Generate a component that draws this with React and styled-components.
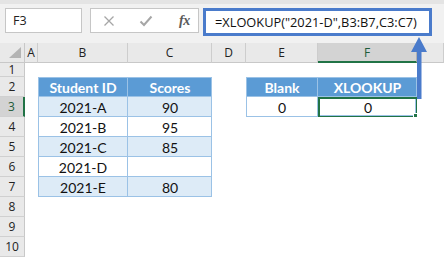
import React from "react";
import styled, { createGlobalStyle } from "styled-components";

const GlobalStyle = createGlobalStyle`
  html, body { margin: 0; padding: 0; background: #ffffff; overflow: hidden; }
  #root { width: 444px; height: 258px; }
`;

const Frame = styled.div`
  position: relative;
  width: 444px;
  height: 258px;
  overflow: hidden;
  background: #ffffff;
`;

const FormulaBar = styled.div`
  display: flex;
  align-items: flex-start;
  height: 43px;
  box-sizing: border-box;
  padding: 8px 0 0 5px;
  background: #f1f1f1;
  border-top: 4px solid #e4e4e4;
  padding-top: 4px;
`;

const NameBox = styled.div`
  box-sizing: border-box;
  width: 77px;
  height: 25px;
  border: 1px solid #c6c6c6;
  background: #ffffff;
  display: flex;
  align-items: center;
  padding-left: 7px;
  font-family: "Open Sans", sans-serif;
  font-size: 12.5px;
  color: #222;
`;

const ButtonBox = styled.div`
  box-sizing: border-box;
  width: 109px;
  height: 25px;
  margin-left: 8px;
  border: 1px solid #c6c6c6;
  background: #ffffff;
  display: flex;
  align-items: center;
  padding-left: 12px;
  gap: 24px;
`;

const FxLabel = styled.span`
  font-family: "Liberation Serif", serif;
  font-style: italic;
  font-weight: bold;
  font-size: 14px;
  color: #5a5a5a;
  margin-left: 2px;
  letter-spacing: -0.5px;
`;

const FormulaBox = styled.div`
  box-sizing: border-box;
  width: 229px;
  height: 28px;
  margin-left: 4px;
  border: 3px solid #4a7bcb;
  background: #ffffff;
  display: flex;
  align-items: center;
  padding-left: 9px;
  font-family: "Open Sans", sans-serif;
  font-size: 12.8px;
  color: #111;
  white-space: nowrap;
`;

const Sheet = styled.div`
  display: grid;
  grid-template-columns: 25px 13px 90px 84px 34px 72px 99px 1fr;
  grid-template-rows: 20px 14px repeat(9, 20px);
`;

const Corner = styled.div`
  background: #e9e9e9;
  border-right: 1px solid #c8c8c8;
  border-bottom: 1px solid #c8c8c8;
  box-sizing: border-box;
  display: flex;
  align-items: flex-end;
  justify-content: flex-end;
  padding: 0 3px 4px 0;
`;

const ColHeader = styled.div`
  box-sizing: border-box;
  background: ${(p) => (p.$selected ? "#d3d3d3" : "#e9e9e9")};
  border-right: 1px solid ${(p) => (p.$selected ? "#b0b0b0" : "#cdcdcd")};
  border-bottom: ${(p) => (p.$selected ? "2px solid #217346" : "1px solid #c8c8c8")};
  display: flex;
  align-items: center;
  justify-content: center;
  font-family: "Open Sans", sans-serif;
  font-size: 12px;
  color: ${(p) => (p.$selected ? "#1f5c3a" : "#222")};
`;

const RowHeader = styled.div`
  box-sizing: border-box;
  background: ${(p) => (p.$selected ? "#d3d3d3" : "#e9e9e9")};
  border-right: ${(p) => (p.$selected ? "2px solid #217346" : "1px solid #c8c8c8")};
  border-bottom: 1px solid #d0d0d0;
  display: flex;
  align-items: center;
  justify-content: center;
  font-family: "Open Sans", sans-serif;
  font-size: 12px;
  color: ${(p) => (p.$selected ? "#1f5c3a" : "#222")};
`;

const TB = "#9bc2e6";

const fills = {
  head: "#5b9bd5",
  band: "#ddebf7",
  plain: "#ffffff",
};

const Cell = styled.div`
  position: relative;
  box-sizing: border-box;
  display: flex;
  align-items: center;
  justify-content: center;
  background: ${(p) => (p.$kind ? fills[p.$kind] : "#ffffff")};
  font-family: "Lato", sans-serif;
  font-size: 14px;
  font-weight: ${(p) => (p.$kind === "head" ? 700 : 400)};
  color: ${(p) => (p.$kind === "head" ? "#ffffff" : "#111")};
  box-shadow: ${(p) =>
    p.$kind
      ? [
          p.$edgeL && `inset 1px 0 0 ${TB}`,
          p.$edgeT && `inset 0 1px 0 ${TB}`,
          `inset -1px 0 0 ${TB}`,
          `inset 0 -1px 0 ${TB}`,
        ]
          .filter(Boolean)
          .join(", ")
      : "none"};
  ${(p) => (p.$active ? "border: 2px solid #217346; margin: 0 -1px -1px 0;" : "")}
`;

const Handle = styled.span`
  position: absolute;
  right: -4px;
  bottom: -4px;
  width: 5px;
  height: 5px;
  background: #217346;
  border: 1px solid #ffffff;
`;

const ArrowSvg = styled.svg`
  position: absolute;
  left: 408px;
  top: 36px;
`;

const cols = ["A", "B", "C", "D", "E", "F", "G"];

const table = {
  2: { B: ["head", "Student ID"], C: ["head", "Scores"], E: ["head", "Blank"], F: ["head", "XLOOKUP"] },
  3: { B: ["band", "2021-A"], C: ["band", "90"], E: ["plain", "0"], F: ["plain", "0"] },
  4: { B: ["plain", "2021-B"], C: ["plain", "95"] },
  5: { B: ["band", "2021-C"], C: ["band", "85"] },
  6: { B: ["plain", "2021-D"], C: ["plain", ""] },
  7: { B: ["band", "2021-E"], C: ["band", "80"] },
};

export default function App() {
  const rows = [1, 2, 3, 4, 5, 6, 7, 8, 9, 10];
  return (
    <Frame>
      <GlobalStyle />
      <FormulaBar>
        <NameBox>F3</NameBox>
        <ButtonBox>
          <svg width="12" height="12" viewBox="0 0 12 12">
            <path d="M1.5 1.5 L10.5 10.5 M10.5 1.5 L1.5 10.5" stroke="#a6a6a6" strokeWidth="1.3" fill="none" />
          </svg>
          <svg width="14" height="12" viewBox="0 0 14 12">
            <path d="M1.5 6.5 L5 10 L12.5 1.5" stroke="#a6a6a6" strokeWidth="2" fill="none" />
          </svg>
          <FxLabel>fx</FxLabel>
        </ButtonBox>
        <FormulaBox>=XLOOKUP("2021-D",B3:B7,C3:C7)</FormulaBox>
      </FormulaBar>
      <Sheet>
        <Corner>
          <svg width="12" height="11" viewBox="0 0 12 11">
            <polygon points="12,0 12,11 0,11" fill="#b4b4b4" />
          </svg>
        </Corner>
        {cols.map((c) => (
          <ColHeader key={c} $selected={c === "F"}>
            {c === "G" ? "" : c}
          </ColHeader>
        ))}
        {rows.map((r) => (
          <React.Fragment key={r}>
            <RowHeader $selected={r === 3}>{r}</RowHeader>
            {cols.map((c) => {
              const d = table[r] && table[r][c];
              const active = r === 3 && c === "F";
              return (
                <Cell
                  key={c}
                  $kind={d ? d[0] : undefined}
                  $edgeL={c === "B" || c === "E"}
                  $edgeT={r === 2}
                  $active={active}
                >
                  {d ? d[1] : ""}
                  {active && <Handle />}
                </Cell>
              );
            })}
          </React.Fragment>
        ))}
      </Sheet>
      <ArrowSvg width="22" height="66" viewBox="0 0 22 66">
        <polygon points="11,1 3,16 19,16" fill="#4a7bcb" />
        <rect x="9" y="15" width="4.5" height="48" fill="#4a7bcb" />
      </ArrowSvg>
    </Frame>
  );
}
